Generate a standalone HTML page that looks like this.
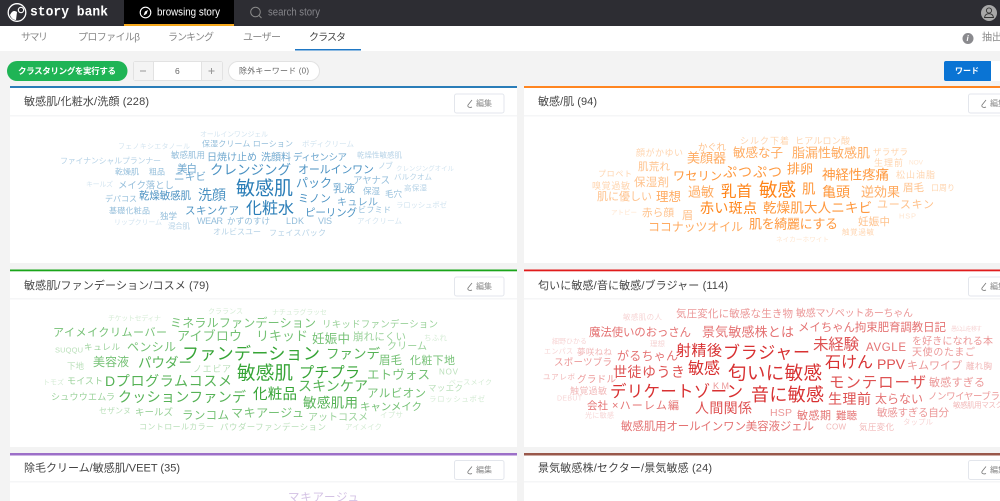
<!DOCTYPE html>
<html lang="ja"><head><meta charset="utf-8"><title>story bank</title>
<style>
html,body{margin:0;padding:0;width:1000px;height:501px;overflow:hidden;background:#f3f3f3}
svg{display:block;filter:blur(.3px)}
text{font-family:"Liberation Sans","Noto Sans CJK JP",sans-serif;dominant-baseline:central}
.a{opacity:.95}.b{opacity:.8}.c{opacity:.65}.d{opacity:.48}.e{opacity:.33}.f{opacity:.2}
.t{font-size:11px;fill:#444}
.n{font-size:10px;fill:#888}
.ed{font-size:8px;fill:#888}
</style></head><body>
<svg width="1000" height="501" viewBox="0 0 1000 501" xmlns="http://www.w3.org/2000/svg">
<rect width="1000" height="501" fill="#f3f3f3"/>
<!-- top bar -->
<rect width="1000" height="26" fill="#2d2d33"/>
<rect x="124" width="110" height="26" fill="#000"/>
<rect x="124" y="24" width="110" height="2" fill="#f5a81c"/>
<circle cx="17" cy="12.500" r="8.800" fill="none" stroke="#fff" stroke-width="1.300"/>
<circle cx="21" cy="10" r="2.700" fill="none" stroke="#fff" stroke-width="1.100"/>
<path d="M10 15c2-4 4-5 7-3l-1 8c-3 0-5-2-6-5z" fill="#fff"/>
<text x="30" y="12.500" textLength="78" lengthAdjust="spacingAndGlyphs" style="font-family:'Liberation Mono',monospace;font-weight:700;font-size:14px" fill="#fff">story bank</text>
<circle cx="145.500" cy="12.500" r="5.300" fill="none" stroke="#fff" stroke-width="1.100"/>
<path d="M148 10l-1.500 4-3 1.500 1.500-4z" fill="#fff"/>
<text x="157" y="12.500" textLength="63" lengthAdjust="spacingAndGlyphs" font-size="11" fill="#fff">browsing story</text>
<circle cx="255.500" cy="12" r="4.800" fill="none" stroke="#8a8a8a" stroke-width="1"/>
<path d="M259 15.500l2.500 2.500" stroke="#8a8a8a" stroke-width="1"/>
<text x="268" y="12.500" textLength="52" lengthAdjust="spacingAndGlyphs" font-size="11" fill="#85858a">search story</text>
<circle cx="989" cy="13" r="8" fill="#a8a8a8"/>
<circle cx="989" cy="10.500" r="2.600" fill="none" stroke="#333" stroke-width=".9"/>
<path d="M984.500 17.500c.5-3 2.500-3.800 4.500-3.800s4 .8 4.500 3.800z" fill="none" stroke="#333" stroke-width=".9"/>
<!-- sub nav -->
<rect y="26" width="1000" height="25" fill="#fff"/>
<text class="n" x="21" y="38" textLength="27">サマリ</text>
<text class="n" x="78" y="38" textLength="62">プロファイルβ</text>
<text class="n" x="168" y="38" textLength="46">ランキング</text>
<text class="n" x="243" y="38" textLength="38">ユーザー</text>
<text class="n" x="309" y="38" textLength="37" style="fill:#444">クラスタ</text>
<rect x="295" y="49" width="66" height="1.500" fill="#1f77c4"/>
<circle cx="968" cy="38.500" r="5.500" fill="#8a8a8e"/>
<text x="966.500" y="38.500" font-size="8" font-weight="700" font-style="italic" fill="#fff">i</text>
<text class="n" x="982" y="38">抽出</text>
<!-- controls -->
<rect x="7" y="61" width="120.500" height="20" rx="10" fill="#1fb455"/>
<text x="18" y="71" textLength="98" font-size="8.500" font-weight="700" fill="#fff">クラスタリングを実行する</text>
<rect x="133.500" y="61.500" width="89" height="19" rx="2" fill="#fff" stroke="#e2e2e2"/>
<rect x="134" y="62" width="19" height="18" fill="#f4f4f4"/>
<rect x="202" y="62" width="20" height="18" fill="#f4f4f4"/>
<path d="M153.500 62v18M201.500 62v18" stroke="#e2e2e2"/>
<path d="M140 71h6" stroke="#999"/><path d="M208.500 71h6M211.500 68v6" stroke="#999"/>
<text x="175" y="71" font-size="8.500" fill="#666">6</text>
<rect x="228.500" y="61.500" width="91" height="19" rx="9.500" fill="#fff" stroke="#e2e2e2"/>
<text x="239" y="71" textLength="70" font-size="8" fill="#666">除外キーワード (0)</text>
<rect x="944" y="61" width="48" height="20" rx="2" fill="#0a74d4"/>
<rect x="991" y="61" width="9" height="20" fill="#fff"/>
<text x="955" y="71" textLength="24" font-size="8" font-weight="700" fill="#fff">ワード</text>
<!-- cards -->
<g fill="#fff">
<rect x="10" y="86" width="507" height="177"/><rect x="524" y="86" width="476" height="177"/>
<rect x="10" y="270" width="507" height="177"/><rect x="524" y="270" width="476" height="177"/>
<rect x="10" y="453" width="507" height="48"/><rect x="524" y="453" width="476" height="48"/>
</g>
<rect x="10" y="86" width="507" height="2" fill="#2a7db8"/>
<rect x="524" y="86" width="476" height="2" fill="#ff8520"/>
<rect x="10" y="269.500" width="507" height="1.800" fill="#1aa51a"/>
<rect x="524" y="269.500" width="476" height="1.800" fill="#e01b1b"/>
<rect x="10" y="453" width="507" height="2.500" fill="#9c6fc8"/>
<rect x="524" y="453" width="476" height="2.500" fill="#99584b"/>
<g fill="#f5f6f7">
<rect x="10" y="115" width="507" height="1.500"/><rect x="524" y="115" width="476" height="1.500"/>
<rect x="10" y="298" width="507" height="1.500"/><rect x="524" y="298" width="476" height="1.500"/>
<rect x="10" y="481" width="507" height="1.500"/><rect x="524" y="481" width="476" height="1.500"/>
</g>
<text class="t" x="24" y="102" textLength="125">敏感肌/化粧水/洗顔 (228)</text>
<text class="t" x="538" y="102" textLength="59">敏感/肌 (94)</text>
<text class="t" x="24" y="286" textLength="185">敏感肌/ファンデーション/コスメ (79)</text>
<text class="t" x="538" y="286" textLength="190">匂いに敏感/音に敏感/ブラジャー (114)</text>
<text class="t" x="24" y="468.500" textLength="156">除毛クリーム/敏感肌/VEET (35)</text>
<text class="t" x="538" y="468.500" textLength="174">景気敏感株/セクター/景気敏感 (24)</text>
<g fill="#fff" stroke="#e3e6ec">
<rect x="454.500" y="94" width="49.500" height="19" rx="2"/><rect x="968.500" y="94" width="40" height="19" rx="2"/>
<rect x="454.500" y="277" width="49.500" height="19" rx="2"/><rect x="968.500" y="277" width="40" height="19" rx="2"/>
<rect x="454.500" y="460.500" width="49.500" height="19" rx="2"/><rect x="968.500" y="460.500" width="40" height="19" rx="2"/>
</g>
<g fill="none" stroke="#777" stroke-width=".8">
<path d="M472 100l-4 5c-1 2 2 3 4 2"/><path d="M986 100l-4 5c-1 2 2 3 4 2"/>
<path d="M472 283l-4 5c-1 2 2 3 4 2"/><path d="M986 283l-4 5c-1 2 2 3 4 2"/>
<path d="M472 466.500l-4 5c-1 2 2 3 4 2"/><path d="M986 466.500l-4 5c-1 2 2 3 4 2"/>
</g>
<text class="ed" x="476" y="103.500">編集</text><text class="ed" x="990" y="103.500">編集</text>
<text class="ed" x="476" y="286.500">編集</text><text class="ed" x="990" y="286.500">編集</text>
<text class="ed" x="476" y="470">編集</text><text class="ed" x="990" y="470">編集</text>
<!-- blue cloud -->
<g fill="#1f77b4">
<text class="f" x="200" y="135" font-size="7" textLength="68">オールインワンジェル</text>
<text class="f" x="118" y="147" font-size="7" textLength="72">フェノキシエタノール</text>
<text class="d" x="202" y="144" font-size="8" textLength="91">保湿クリーム ローション</text>
<text class="f" x="302" y="144" font-size="7.500" textLength="52">ボディクリーム</text>
<text class="e" x="60" y="161" font-size="8" textLength="101">ファイナンシャルプランナー</text>
<text class="d" x="171" y="155" font-size="8.500" textLength="34">敏感肌用</text>
<text class="c" x="207" y="158" font-size="10" textLength="50">日焼け止め</text>
<text class="c" x="261" y="158" font-size="10" textLength="30">洗顔料</text>
<text class="c" x="293" y="158" font-size="9.500" textLength="54">ディセンシア</text>
<text class="e" x="357" y="155" font-size="7.500" textLength="45">乾燥性敏感肌</text>
<text class="e" x="378" y="166" font-size="8" textLength="15">ノブ</text>
<text class="f" x="396" y="169" font-size="6.500" textLength="58">クレンジングオイル</text>
<text class="d" x="115" y="172" font-size="8" textLength="24">乾燥肌</text>
<text class="d" x="149" y="172" font-size="8" textLength="16">粗品</text>
<text class="c" x="177" y="169" font-size="10.500" textLength="20">美白</text>
<text class="b" x="210" y="170" font-size="13.500" textLength="81">クレンジング</text>
<text class="b" x="298" y="170" font-size="11" textLength="76">オールインワン</text>
<text class="c" x="174" y="177" font-size="10.500" textLength="32">ニキビ</text>
<text class="e" x="394" y="177" font-size="7.500" textLength="38">バルクオム</text>
<text class="f" x="86" y="185" font-size="7" textLength="27">キールズ</text>
<text class="d" x="118" y="186" font-size="9.500" textLength="56">メイク落とし</text>
<text class="b" x="296" y="183" font-size="12" textLength="36">パック</text>
<text class="d" x="353" y="181" font-size="9.500" textLength="37">アヤナス</text>
<text class="a" x="236" y="189" font-size="19" textLength="57">敏感肌</text>
<text class="b" x="198" y="195" font-size="14" textLength="28">洗顔</text>
<text class="c" x="333" y="189" font-size="11" textLength="22">乳液</text>
<text class="d" x="363" y="191" font-size="8.500" textLength="17">保湿</text>
<text class="d" x="385" y="194" font-size="8.500" textLength="17">毛穴</text>
<text class="e" x="404" y="188" font-size="7.500" textLength="23">高保湿</text>
<text class="d" x="105" y="199" font-size="8" textLength="32">デパコス</text>
<text class="b" x="139" y="196" font-size="10.500" textLength="52">乾燥敏感肌</text>
<text class="b" x="298" y="199" font-size="11" textLength="33">ミノン</text>
<text class="c" x="337" y="203" font-size="10" textLength="41">キュレル</text>
<text class="a" x="246" y="209" font-size="16" textLength="48">化粧水</text>
<text class="b" x="185" y="211" font-size="10.500" textLength="54">スキンケア</text>
<text class="d" x="109" y="211" font-size="8" textLength="41">基礎化粧品</text>
<text class="b" x="305" y="213" font-size="10.500" textLength="52">ピーリング</text>
<text class="d" x="358" y="210" font-size="8" textLength="33">ビフミド</text>
<text class="f" x="396" y="205" font-size="7.500" textLength="51">ラロッシュポゼ</text>
<text class="d" x="160" y="216" font-size="8.500" textLength="17">独学</text>
<text class="d" x="197" y="221" font-size="9" textLength="26">WEAR</text>
<text class="d" x="227" y="221" font-size="8.500" textLength="43">かずのすけ</text>
<text class="d" x="286" y="221" font-size="9" textLength="18">LDK</text>
<text class="d" x="318" y="221" font-size="9" textLength="14">VIS</text>
<text class="f" x="357" y="221" font-size="7.500" textLength="45">アイクリーム</text>
<text class="f" x="114" y="223" font-size="7" textLength="48">リップクリーム</text>
<text class="e" x="168" y="226" font-size="7.500" textLength="22">混合肌</text>
<text class="e" x="213" y="232" font-size="8" textLength="48">オルビスユー</text>
<text class="e" x="269" y="233" font-size="8" textLength="57">フェイスパック</text>
</g>
<!-- orange cloud -->
<g fill="#ff7f0e">
<text class="e" x="740" y="141" font-size="9" textLength="49">シルク下着</text>
<text class="e" x="795" y="141" font-size="9" textLength="55">ヒアルロン酸</text>
<text class="d" x="698" y="148" font-size="9.500" textLength="28">かぐれ</text>
<text class="e" x="636" y="153" font-size="9" textLength="47">顔がかゆい</text>
<text class="e" x="873" y="152" font-size="8.500" textLength="35">ザラザラ</text>
<text class="c" x="733" y="153" font-size="12.500" textLength="50">敏感な子</text>
<text class="c" x="792" y="153" font-size="13" textLength="78">脂漏性敏感肌</text>
<text class="c" x="687" y="158" font-size="13" textLength="39">美顔器</text>
<text class="e" x="874" y="163" font-size="9" textLength="29">生理前</text>
<text class="f" x="909" y="163" font-size="6.500" textLength="14">NOV</text>
<text class="d" x="638" y="167" font-size="10.500" textLength="32">肌荒れ</text>
<text class="e" x="598" y="174" font-size="8" textLength="34">プロペト</text>
<text class="b" x="673" y="176" font-size="12" textLength="49">ワセリン</text>
<text class="b" x="723" y="172" font-size="14" textLength="59">ぷつぷつ</text>
<text class="b" x="787" y="169" font-size="13" textLength="26">排卵</text>
<text class="b" x="822" y="175" font-size="13.500" textLength="67">神経性疼痛</text>
<text class="e" x="896" y="175" font-size="9" textLength="39">松山油脂</text>
<text class="d" x="634" y="183" font-size="11.500" textLength="35">保湿剤</text>
<text class="e" x="592" y="186" font-size="9" textLength="38">嗅覚過敏</text>
<text class="c" x="688" y="192" font-size="13" textLength="26">過敏</text>
<text class="a" x="721" y="192" font-size="15.500" textLength="31">乳首</text>
<text class="a" x="759" y="190" font-size="18.500" textLength="37">敏感</text>
<text class="b" x="802" y="189" font-size="13.500" textLength="13">肌</text>
<text class="b" x="822" y="192" font-size="14" textLength="28">亀頭</text>
<text class="c" x="861" y="192" font-size="13" textLength="39">逆効果</text>
<text class="d" x="903" y="188" font-size="10.500" textLength="21">眉毛</text>
<text class="e" x="931" y="188" font-size="8" textLength="24">口周り</text>
<text class="d" x="597" y="197" font-size="11" textLength="55">肌に優しい</text>
<text class="c" x="656" y="197" font-size="12.500" textLength="25">理想</text>
<text class="a" x="700" y="208" font-size="14" textLength="57">赤い斑点</text>
<text class="b" x="763" y="208" font-size="13.500" textLength="109">乾燥肌大人ニキビ</text>
<text class="d" x="877" y="205" font-size="11" textLength="57">ユースキン</text>
<text class="f" x="611" y="213" font-size="6.500" textLength="26">アトピー</text>
<text class="d" x="642" y="213" font-size="10.500" textLength="32">赤ら顔</text>
<text class="d" x="682" y="216" font-size="11" textLength="11">眉</text>
<text class="f" x="899" y="216" font-size="7.500" textLength="17">HSP</text>
<text class="d" x="858" y="222" font-size="10.500" textLength="32">妊娠中</text>
<text class="c" x="648" y="227" font-size="12" textLength="95">ココナッツオイル</text>
<text class="b" x="749" y="224" font-size="13" textLength="89">肌を綺麗にする</text>
<text class="e" x="842" y="232" font-size="7.500" textLength="32">触覚過敏</text>
<text class="f" x="776" y="240" font-size="6.500" textLength="53">ネイカーホワイト</text>
</g>
<!-- green cloud -->
<g fill="#2ca02c">
<text class="f" x="208" y="312" font-size="7" textLength="35">クラランス</text>
<text class="f" x="272" y="313" font-size="7" textLength="55">ナチュラグラッセ</text>
<text class="f" x="108" y="319" font-size="7" textLength="53">チケットセディナ</text>
<text class="c" x="170" y="323" font-size="12" textLength="146">ミネラルファンデーション</text>
<text class="d" x="322" y="325" font-size="9.500" textLength="116">リキッドファンデーション</text>
<text class="c" x="53" y="333" font-size="11" textLength="114">アイメイクリムーバー</text>
<text class="c" x="177" y="336" font-size="13" textLength="65">アイブロウ</text>
<text class="c" x="256" y="336" font-size="13" textLength="52">リキッド</text>
<text class="c" x="312" y="339" font-size="12.500" textLength="38">妊娠中</text>
<text class="d" x="353" y="337" font-size="10.500" textLength="53">崩れにくい</text>
<text class="f" x="424" y="338" font-size="7.500" textLength="23">ちふれ</text>
<text class="d" x="84" y="347" font-size="8.500" textLength="36">キュレル</text>
<text class="c" x="127" y="347" font-size="12" textLength="49">ペンシル</text>
<text class="e" x="55" y="350" font-size="7.500" textLength="28">SUQQU</text>
<text class="d" x="387" y="347" font-size="10" textLength="40">クリーム</text>
<text class="a" x="182" y="354" font-size="17" textLength="138">ファンデーション</text>
<text class="b" x="326" y="354" font-size="13.500" textLength="54">ファンデ</text>
<text class="c" x="93" y="362" font-size="12" textLength="36">美容液</text>
<text class="b" x="138" y="363" font-size="13.500" textLength="54">パウダー</text>
<text class="c" x="379" y="361" font-size="11.500" textLength="23">眉毛</text>
<text class="c" x="410" y="361" font-size="11" textLength="45">化粧下地</text>
<text class="e" x="67" y="366" font-size="8.500" textLength="17">下地</text>
<text class="e" x="193" y="369" font-size="9" textLength="38">ノエビア</text>
<text class="a" x="237" y="373" font-size="18.500" textLength="56">敏感肌</text>
<text class="a" x="299" y="373" font-size="15" textLength="61">プチプラ</text>
<text class="c" x="367" y="375" font-size="12.500" textLength="63">エトヴォス</text>
<text class="e" x="439" y="372" font-size="8" textLength="19">NOV</text>
<text class="f" x="43" y="383" font-size="7" textLength="21">トモズ</text>
<text class="d" x="67" y="381" font-size="9" textLength="36">モイスト</text>
<text class="b" x="105" y="381" font-size="14" textLength="127">Dプログラムコスメ</text>
<text class="b" x="298" y="386" font-size="14" textLength="70">スキンケア</text>
<text class="f" x="449" y="383" font-size="7" textLength="43">ベースメイク</text>
<text class="c" x="367" y="394" font-size="11.500" textLength="59">アルビオン</text>
<text class="e" x="428" y="388" font-size="8.500" textLength="35">マッエク</text>
<text class="d" x="51" y="397" font-size="9" textLength="64">シュウウエムラ</text>
<text class="b" x="118" y="397" font-size="14" textLength="128">クッションファンデ</text>
<text class="a" x="253" y="395" font-size="14.500" textLength="44">化粧品</text>
<text class="f" x="429" y="399" font-size="7.500" textLength="56">ラロッシュポゼ</text>
<text class="b" x="303" y="403" font-size="13.500" textLength="55">敏感肌用</text>
<text class="e" x="99" y="411" font-size="8" textLength="32">セザンヌ</text>
<text class="d" x="135" y="413" font-size="9.500" textLength="38">キールズ</text>
<text class="c" x="182" y="416" font-size="11.500" textLength="47">ランコム</text>
<text class="c" x="231" y="413" font-size="12" textLength="73">マキアージュ</text>
<text class="c" x="360" y="407" font-size="10.500" textLength="62">キャンメイク</text>
<text class="d" x="308" y="418" font-size="10" textLength="60">アットコスメ</text>
<text class="f" x="380" y="415" font-size="7.500" textLength="23">イプサ</text>
<text class="e" x="139" y="427" font-size="8" textLength="75">コントロールカラー</text>
<text class="e" x="220" y="427" font-size="8.500" textLength="106">パウダーファンデーション</text>
<text class="f" x="345" y="427" font-size="7.500" textLength="37">アイメイク</text>
</g>
<!-- red cloud -->
<g fill="#d62728">
<text class="f" x="623" y="317" font-size="7.500" textLength="39">敏感肌の人</text>
<text class="d" x="676" y="314" font-size="10.500" textLength="117">気圧変化に敏感な生き物</text>
<text class="d" x="796" y="314" font-size="10" textLength="117">敏感マゾペットあーちゃん</text>
<text class="c" x="589" y="333" font-size="11.500" textLength="102">魔法使いのおっさん</text>
<text class="c" x="702" y="332" font-size="13" textLength="92">景気敏感株とは</text>
<text class="c" x="798" y="328" font-size="11.500" textLength="148">メイちゃん拘束肥育調教日記</text>
<text class="f" x="951" y="330" font-size="6" textLength="31">愚公山を移す</text>
<text class="f" x="552" y="342" font-size="7" textLength="35">細野ひかる</text>
<text class="f" x="650" y="344" font-size="7.500" textLength="15">理想</text>
<text class="c" x="866" y="348" font-size="11.500" textLength="40">AVGLE</text>
<text class="d" x="912" y="342" font-size="10" textLength="81">を好きになれる本</text>
<text class="a" x="676" y="351" font-size="15" textLength="46">射精後</text>
<text class="a" x="723" y="353" font-size="17" textLength="87">ブラジャー</text>
<text class="b" x="813" y="345" font-size="15.500" textLength="46">未経験</text>
<text class="f" x="544" y="352" font-size="7" textLength="29">エンパス</text>
<text class="e" x="577" y="352" font-size="8.500" textLength="35">夢咲ねね</text>
<text class="d" x="912" y="353" font-size="10" textLength="63">天使のたまご</text>
<text class="c" x="617" y="356" font-size="12" textLength="61">がるちゃん</text>
<text class="d" x="554" y="363" font-size="9.500" textLength="58">スポーツブラ</text>
<text class="a" x="825" y="363" font-size="16" textLength="48">石けん</text>
<text class="b" x="877" y="364" font-size="14" textLength="28">PPV</text>
<text class="d" x="907" y="366" font-size="11" textLength="55">キムワイプ</text>
<text class="e" x="966" y="366" font-size="8.500" textLength="26">離れ胸</text>
<text class="b" x="613" y="372" font-size="14" textLength="72">世徒ゆうき</text>
<text class="a" x="688" y="369" font-size="16" textLength="32">敏感</text>
<text class="a" x="728" y="373" font-size="18.500" textLength="94">匂いに敏感</text>
<text class="e" x="543" y="377" font-size="7.500" textLength="32">ユアレボ</text>
<text class="d" x="577" y="380" font-size="9.500" textLength="39">グラドル</text>
<text class="b" x="829" y="383" font-size="15.500" textLength="97">モンテローザ</text>
<text class="d" x="929" y="383" font-size="11" textLength="56">敏感すぎる</text>
<text class="d" x="713" y="386" font-size="9" textLength="16">KM</text>
<text class="a" x="610" y="392" font-size="16.500" textLength="133">デリケートゾーン</text>
<text class="a" x="751" y="395" font-size="18" textLength="73">音に敏感</text>
<text class="e" x="570" y="391" font-size="9" textLength="37">触覚過敏</text>
<text class="f" x="557" y="399" font-size="7" textLength="25">DEBUT</text>
<text class="b" x="828" y="399" font-size="14" textLength="43">生理前</text>
<text class="c" x="875" y="399" font-size="12" textLength="48">太らない</text>
<text class="d" x="928" y="397" font-size="9.500" textLength="72">ノンワイヤーブラ</text>
<text class="c" x="587" y="406" font-size="10.500" textLength="21">会社</text>
<text class="c" x="612" y="406" font-size="11" textLength="67">×ハーレム編</text>
<text class="b" x="695" y="408" font-size="14" textLength="57">人間関係</text>
<text class="e" x="953" y="405" font-size="7.500" textLength="50">敏感肌用マスク</text>
<text class="f" x="585" y="416" font-size="7" textLength="29">光に敏感</text>
<text class="d" x="770" y="413" font-size="10.500" textLength="22">HSP</text>
<text class="c" x="797" y="416" font-size="11" textLength="34">敏感期</text>
<text class="c" x="836" y="416" font-size="10.500" textLength="21">難聴</text>
<text class="d" x="877" y="413" font-size="10.500" textLength="72">敏感すぎる自分</text>
<text class="f" x="903" y="422" font-size="7.500" textLength="30">タップル</text>
<text class="c" x="621" y="427" font-size="11.500" textLength="193">敏感肌用オールインワン美容液ジェル</text>
<text class="e" x="826" y="427" font-size="8" textLength="20">COW</text>
<text class="e" x="859" y="427" font-size="8.500" textLength="35">気圧変化</text>
</g>
<text x="288" y="498" font-size="11.500" textLength="71" fill="#9467bd" opacity=".4">マキアージュ</text>
</svg>
</body></html>
